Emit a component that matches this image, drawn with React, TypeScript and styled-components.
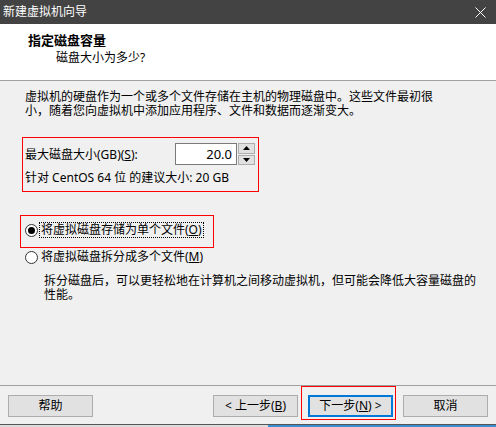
import styled, { createGlobalStyle } from 'styled-components'

const GlobalStyle = createGlobalStyle`
  html, body {
    margin: 0;
    padding: 0;
    background: #f0f0f0;
  }
  * {
    box-sizing: border-box;
  }
`

function CloseIcon() {
  return (
    <svg width="11" height="11" viewBox="0 0 11 11">
      <path d="M0.5 0.5 L10.5 10.5 M10.5 0.5 L0.5 10.5" stroke="#fff" strokeWidth="1" />
    </svg>
  )
}

function SpinArrows() {
  return (
    <SpinBox>
      <SpinButton>
        <svg width="7" height="4" viewBox="0 0 7 4">
          <path d="M0 4 L3.5 0 L7 4 Z" fill="#000" />
        </svg>
      </SpinButton>
      <SpinButton>
        <svg width="7" height="4" viewBox="0 0 7 4">
          <path d="M0 0 L3.5 4 L7 0 Z" fill="#000" />
        </svg>
      </SpinButton>
    </SpinBox>
  )
}

function App() {
  return (
    <>
      <GlobalStyle />
      <Window>
        <TitleBar>
          <span>新建虚拟机向导</span>
          <CloseButton>
            <CloseIcon />
          </CloseButton>
        </TitleBar>

        <Header>
          <HeaderTitle>指定磁盘容量</HeaderTitle>
          <HeaderSub>磁盘大小为多少?</HeaderSub>
        </Header>

        <Body>
          <Paragraph>
            <Line>虚拟机的硬盘作为一个或多个文件存储在主机的物理磁盘中。这些文件最初很</Line>
            <Line>小，随着您向虚拟机中添加应用程序、文件和数据而逐渐变大。</Line>
          </Paragraph>

          <SizeBox>
            <SizeRow>
              <span>
                最大磁盘大小(GB)(<u>S</u>):
              </span>
              <Spinner>
                <SpinInput>20.0</SpinInput>
                <SpinArrows />
              </Spinner>
            </SizeRow>
            <Hint>针对 CentOS 64 位 的建议大小: 20 GB</Hint>
          </SizeBox>

          <OptionBox>
            <RadioRow>
              <Radio $checked />
              <FocusLabel>
                将虚拟磁盘存储为单个文件(<u>O</u>)
              </FocusLabel>
            </RadioRow>
          </OptionBox>

          <PlainRadioRow>
            <Radio />
            <RadioText>
              将虚拟磁盘拆分成多个文件(<u>M</u>)
            </RadioText>
          </PlainRadioRow>

          <Description>
            <Line>拆分磁盘后，可以更轻松地在计算机之间移动虚拟机，但可能会降低大容量磁盘的</Line>
            <Line>性能。</Line>
          </Description>
        </Body>

        <Footer>
          <Button>帮助</Button>
          <NavGroup>
            <Button>
              &lt; 上一步(<u>B</u>)
            </Button>
            <Marked>
              <Button $primary>
                下一步(<u>N</u>) &gt;
              </Button>
            </Marked>
            <Button>取消</Button>
          </NavGroup>
        </Footer>

        <Taskbar>
          <TaskLeft />
          <TaskRight />
        </Taskbar>
      </Window>
    </>
  )
}

export default App

const Window = styled.div`
  width: 496px;
  height: 427px;
  display: flex;
  flex-direction: column;
  overflow: hidden;
  background: #f0f0f0;
  color: #000;
  font-family: 'Noto Sans', 'Noto Sans CJK SC', sans-serif;
  font-size: 12px;
`

const TitleBar = styled.div`
  height: 24px;
  flex-shrink: 0;
  display: flex;
  align-items: center;
  justify-content: space-between;
  padding-left: 3px;
  background: #434343;
  color: #fff;
  font-size: 12px;
  line-height: 16px;
`

const CloseButton = styled.div`
  width: 32px;
  height: 24px;
  display: flex;
  align-items: center;
  justify-content: center;
`

const Header = styled.div`
  height: 57px;
  flex-shrink: 0;
  background: #fff;
  border-bottom: 1px solid #a0a0a0;
  padding-top: 8px;
`

const HeaderTitle = styled.div`
  margin-left: 28px;
  font-weight: bold;
  font-size: 13px;
  line-height: 16px;
`

const HeaderSub = styled.div`
  margin-left: 56px;
  margin-top: 2px;
  line-height: 16px;
`

const Body = styled.div`
  flex: 1;
  display: flex;
  flex-direction: column;
  align-items: flex-start;
`

const Paragraph = styled.div`
  margin: 9px 0 0 25px;
  display: flex;
  flex-direction: column;
`

const Line = styled.div`
  line-height: 14px;
  height: 14px;
  white-space: nowrap;
`

const SizeBox = styled.div`
  margin: 19px 0 0 22px;
  width: 237px;
  height: 55px;
  border: 1px solid #ff0000;
  padding: 5px 3px 0 2px;
`

const SizeRow = styled.div`
  display: flex;
  align-items: center;
  justify-content: space-between;
  height: 22px;
`

const Spinner = styled.div`
  display: flex;
  align-items: stretch;
  height: 22px;
`

const SpinInput = styled.div`
  width: 62px;
  border: 1px solid #7a7a7a;
  background: #fff;
  text-align: right;
  padding-right: 4px;
  line-height: 20px;
  font-size: 13px;
`

const SpinBox = styled.div`
  display: flex;
  flex-direction: column;
  margin-left: 1px;
  width: 17px;
  gap: 1px;
`

const SpinButton = styled.div`
  flex: 1;
  display: flex;
  align-items: center;
  justify-content: center;
  background: #e1e1e1;
  border: 1px solid #adadad;
`

const Hint = styled.div`
  margin-top: 5px;
  line-height: 16px;
`

const OptionBox = styled.div`
  margin: 23px 0 0 20px;
  width: 194px;
  height: 33px;
  border: 1px solid #ff0000;
  padding: 6px 0 0 4px;
`

const RadioRow = styled.div`
  display: flex;
  align-items: center;
  height: 16px;
`

const PlainRadioRow = styled(RadioRow)`
  margin: 1px 0 0 25px;
`

const Radio = styled.div<{ $checked?: boolean }>`
  width: 13px;
  height: 13px;
  border-radius: 50%;
  border: 1px solid #333;
  background: #fff;
  display: flex;
  align-items: center;
  justify-content: center;
  flex-shrink: 0;

  &::after {
    content: '';
    display: ${(p) => (p.$checked ? 'block' : 'none')};
    width: 7px;
    height: 7px;
    border-radius: 50%;
    background: #000;
  }
`

const FocusLabel = styled.div`
  margin-left: 1px;
  border: 1px dotted #000;
  padding: 0 1px;
  line-height: 14px;
  white-space: nowrap;
`

const RadioText = styled.div`
  margin-left: 3px;
  line-height: 16px;
  white-space: nowrap;
`

const Description = styled.div`
  margin: 9px 0 0 44px;
  display: flex;
  flex-direction: column;
`

const Footer = styled.div`
  height: 39px;
  flex-shrink: 0;
  border-top: 1px solid #a0a0a0;
  padding: 9px 8px 0 8px;
  display: flex;
  align-items: flex-start;
`

const NavGroup = styled.div`
  margin-left: auto;
  display: flex;
  gap: 10px;
`

const Button = styled.div<{ $primary?: boolean }>`
  width: 85px;
  height: 22px;
  display: flex;
  align-items: center;
  justify-content: center;
  background: #e1e1e1;
  border: ${(p) => (p.$primary ? '2px solid #0078d7' : '1px solid #adadad')};
  line-height: 16px;
  white-space: nowrap;
`

const Marked = styled.div`
  position: relative;

  &::after {
    content: '';
    position: absolute;
    left: -7px;
    top: -9px;
    right: -3px;
    bottom: -3px;
    border: 1px solid #ff0000;
    pointer-events: none;
  }
`

const Taskbar = styled.div`
  height: 3px;
  flex-shrink: 0;
  display: flex;
  border-top: 1px solid #555;
`

const TaskLeft = styled.div`
  width: 268px;
  background: #dcdcdc;
`

const TaskRight = styled.div`
  flex: 1;
  background: #3a8fd0;
`
